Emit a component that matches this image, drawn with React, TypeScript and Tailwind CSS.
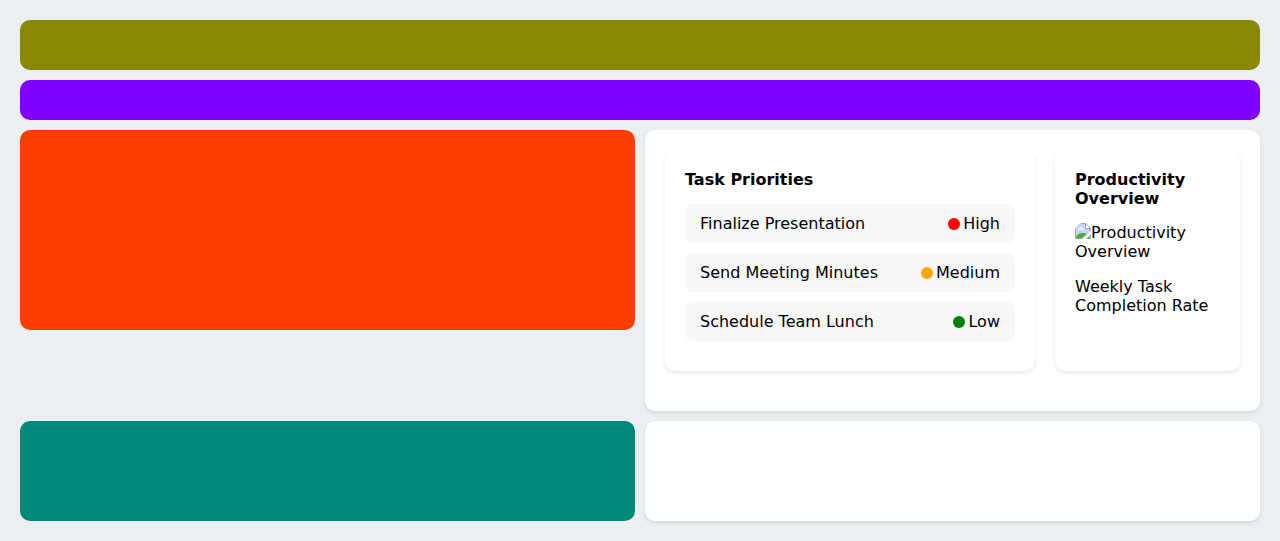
const tasks = [
  { name: "Finalize Presentation", level: "High", dot: "bg-[#ff0000]" },
  { name: "Send Meeting Minutes", level: "Medium", dot: "bg-[#ffa500]" },
  { name: "Schedule Team Lunch", level: "Low", dot: "bg-[#008000]" },
];

const panel = "rounded-[10px] bg-white shadow-[0_2px_4px_rgba(0,0,0,0.1)]";

function TaskPriorities() {
  return (
    <section className={`${panel} p-5`}>
      <h2 className="mb-[15px] font-bold">Task Priorities</h2>
      <ul>
        {tasks.map((task) => (
          <li
            key={task.name}
            className="mb-[10px] flex items-center justify-between rounded-lg bg-[#f7f7f7] px-[15px] py-[10px]"
          >
            <span>{task.name}</span>
            <span className="flex items-center gap-[3px]">
              <span className={`size-3 rounded-full ${task.dot}`} />
              {task.level}
            </span>
          </li>
        ))}
      </ul>
    </section>
  );
}

function BrokenImageIcon() {
  return (
    <svg className="inline-block size-4 align-text-top" viewBox="0 0 16 16" aria-hidden="true">
      <path d="M0.5 0.5H11L15.5 5V8L7.5 15.5H0.5Z" fill="#c3d5f8" />
      <path d="M3 6.500a1.500 1.500 0 0 1 1.500-1.500 2 2 0 0 1 3.500 0 1 1 0 0 1 .5 2H3.500z" fill="#e8effc" />
      <path d="M1 15C1.500 12 4 10 7.500 10c2 0 3.500.4 4.500 1L7.500 15Z" fill="#55ab35" />
      <path d="M11.500 15.500L15.500 11.500V15.500Z" fill="#c3d5f8" />
      <path d="M12 15.200L14 13.200L15 15.200Z" fill="#55ab35" />
      <path d="M7.500 15.500H0.500V0.500H11M15.500 5V8M15.500 11.500V15.500H11.500" fill="none" stroke="#a0a0a0" />
      <path d="M10.500 0.500V5.500H15.500Z" fill="#fff" stroke="#a0a0a0" />
    </svg>
  );
}

function ProductivityOverview() {
  return (
    <section className={`${panel} p-5`}>
      <h2 className="mb-[15px] font-bold">Productivity Overview</h2>
      <div className="mb-4 overflow-hidden rounded-lg">
        <BrokenImageIcon />
        Productivity Overview
      </div>
      <p>Weekly Task Completion Rate</p>
    </section>
  );
}

export default function App() {
  return (
    <main className="grid min-h-screen grid-cols-2 content-start gap-[10px] bg-[#ebeff2] p-5 font-['DejaVu_Sans',sans-serif] text-base leading-[19px] text-black">
      <header className="col-span-2 h-[50px] rounded-[10px] bg-[#8a8700]" />
      <nav className="col-span-2 h-10 rounded-[10px] bg-[#8000ff]" />
      <div className="h-[200px] rounded-[10px] bg-[#ff3d00]" />
      <div className={`${panel} grid grid-cols-[2fr_1fr] gap-5 px-5 pt-5 pb-10`}>
        <TaskPriorities />
        <ProductivityOverview />
      </div>
      <div className="h-[100px] rounded-[10px] bg-[#00897b]" />
      <div className={panel} />
    </main>
  );
}
